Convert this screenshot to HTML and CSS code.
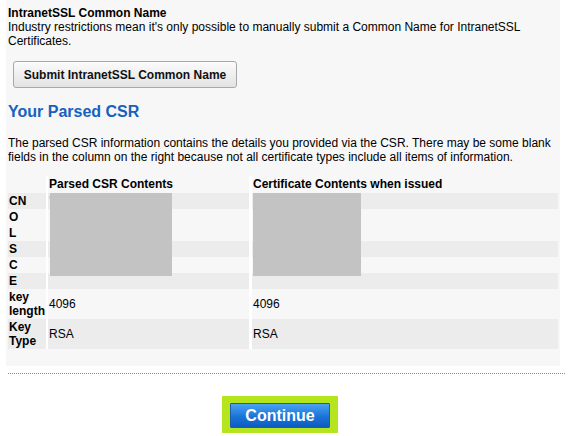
FILE: index.html
```html
<!DOCTYPE html>
<html>
<head>
<meta charset="utf-8">
<link rel="stylesheet" href="styles.css">
</head>
<body>
<div class="page">
  <div class="panel">
    <div class="field-title">IntranetSSL Common Name</div>
    <div class="field-desc">Industry restrictions mean it's only possible to manually submit a Common Name for IntranetSSL Certificates.</div>
    <button class="btn-submit">Submit IntranetSSL Common Name</button>
    <h2 class="section-title">Your Parsed CSR</h2>
    <p class="intro">The parsed CSR information contains the details you provided via the CSR. There may be some blank fields in the column on the right because not all certificate types include all items of information.</p>
    <div class="table-wrap">
      <table class="csr">
        <thead>
          <tr><th class="c1"></th><th class="c2">Parsed CSR Contents</th><th class="c3">Certificate Contents when issued</th></tr>
        </thead>
        <tbody>
          <tr class="dark"><th class="c1">CN</th><td class="c2"><span class="speck">'</span></td><td class="c3"></td></tr>
          <tr><th class="c1">O</th><td class="c2"></td><td class="c3"></td></tr>
          <tr><th class="c1">L</th><td class="c2"></td><td class="c3"></td></tr>
          <tr class="dark"><th class="c1">S</th><td class="c2"></td><td class="c3"></td></tr>
          <tr><th class="c1">C</th><td class="c2"></td><td class="c3"></td></tr>
          <tr class="dark"><th class="c1">E</th><td class="c2"></td><td class="c3"></td></tr>
          <tr><th class="c1">key length</th><td class="c2">4096</td><td class="c3">4096</td></tr>
          <tr class="dark"><th class="c1">Key Type</th><td class="c2">RSA</td><td class="c3">RSA</td></tr>
        </tbody>
      </table>
      <div class="redact redact-a"></div>
      <div class="redact redact-b"></div>
    </div>
  </div>
  <div class="divider"></div>
  <div class="footer">
    <div class="continue-frame"><button class="btn-continue">Continue</button></div>
  </div>
</div>
</body>
</html>
```

FILE: styles.css
```css
html, body {
  margin: 0;
  padding: 0;
  background: #ffffff;
}
body {
  font-family: "Liberation Sans", Arial, sans-serif;
  font-size: 12px;
  line-height: 14px;
  color: #000;
}
.page {
  width: 566px;
}
.panel {
  margin: 0 0 0 6px;
  width: 554px;
  box-sizing: border-box;
  padding: 6px 2px 17px 2px;
  background: #f7f7f7;
}
.field-title {
  font-weight: bold;
}
.btn-submit {
  display: block;
  margin: 13px 0 0 5px;
  width: 224px;
  height: 27px;
  padding: 0;
  font-family: "Liberation Sans", Arial, sans-serif;
  font-size: 12px;
  font-weight: bold;
  color: #111;
  background: linear-gradient(#fbfbfb, #e3e3e3);
  border: 1px solid #a8a8a8;
  border-radius: 3px;
}
.section-title {
  margin: 14px 0 0 0;
  font-size: 16px;
  line-height: 20px;
  font-weight: bold;
  color: #1761bd;
}
.intro {
  margin: 14px 0 0 0;
}
.table-wrap {
  position: relative;
  margin-top: 12px;
}
.csr {
  width: 550px;
  border-collapse: collapse;
  border-spacing: 0;
}
.csr th, .csr td {
  padding: 1px 1px;
  text-align: left;
  vertical-align: middle;
  font-size: 12px;
  line-height: 14px;
}
.csr th {
  font-weight: bold;
}
.csr thead th {
  padding: 1px 1px 2px 1px;
  line-height: 14px;
}
.csr .c1 {
  width: 36px;
}
.csr .c2 {
  width: 199px;
  border-left: 2px solid #ffffff;
}
.csr .c3 {
  border-left: 3px solid #ffffff;
}
.csr tr.dark th, .csr tr.dark td {
  background: #ececec;
}
.speck {
  color: #e0a050;
}
.redact {
  position: absolute;
  top: 17px;
  height: 83px;
  background: #c3c3c3;
}
.redact-a {
  left: 42px;
  width: 122px;
}
.redact-b {
  left: 245px;
  width: 108px;
}
.divider {
  margin: 7px 1px 0 8px;
  border-top: 1px dotted #8a8a8a;
}
.footer {
  width: 560px;
  display: flex;
  justify-content: center;
  padding-top: 22px;
}
.continue-frame {
  background: #b5e61d;
  padding: 7px 8px 5px 8px;
}
.btn-continue {
  display: block;
  width: 100px;
  height: 25px;
  padding: 0;
  font-family: "Liberation Sans", Arial, sans-serif;
  font-size: 16px;
  font-weight: bold;
  color: #ffffff;
  background: linear-gradient(#4aa3f2, #1a74d8 55%, #0d5cc0);
  border: 1px solid #1d5ea8;
  border-radius: 1px;
}
```
